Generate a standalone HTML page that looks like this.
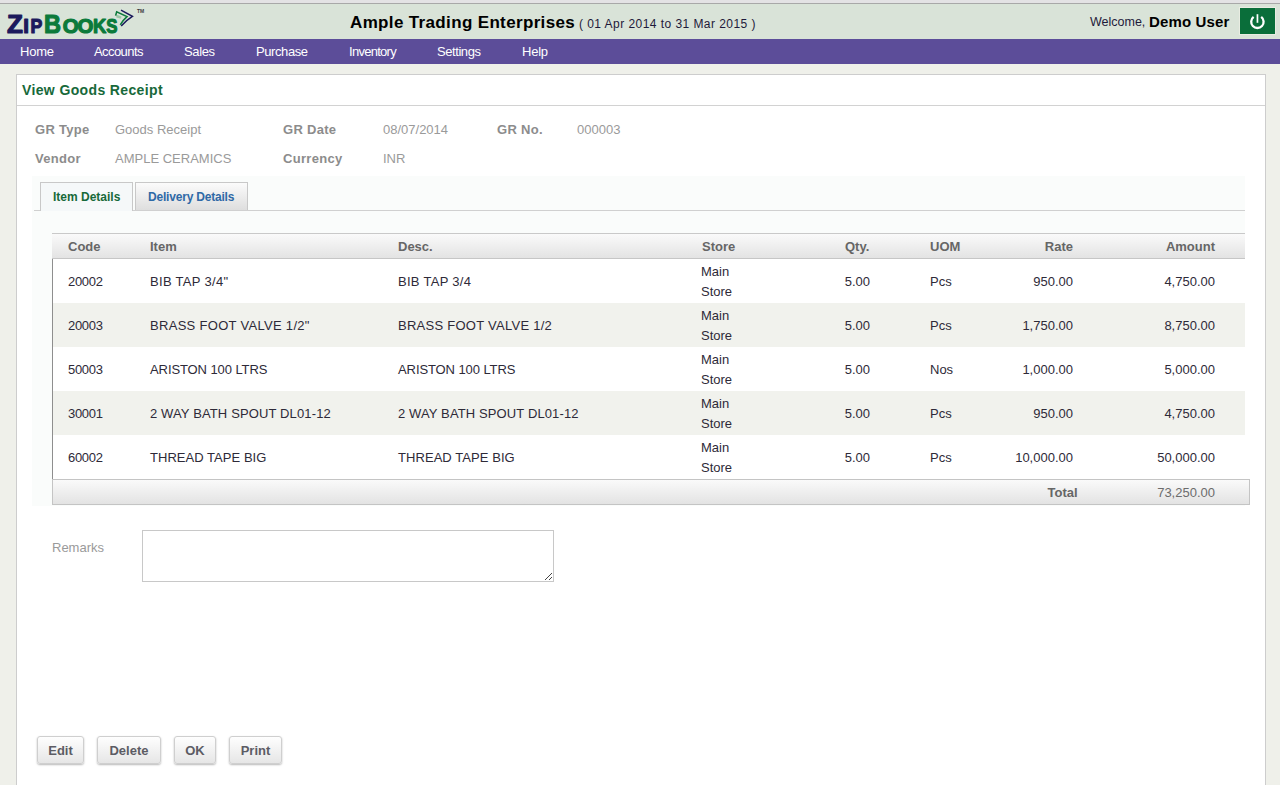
<!DOCTYPE html>
<html><head><meta charset="utf-8">
<style>
*{margin:0;padding:0;box-sizing:border-box}
html,body{width:1280px;height:785px;overflow:hidden}
body{background:#eff0ea;font-family:"Liberation Sans",sans-serif;position:relative;color:#333}
.a{position:absolute;white-space:nowrap;line-height:1}
#topstrip{left:0;top:0;width:1280px;height:3px;background:#e3e2e4}
#topline{left:0;top:3px;width:1280px;height:1px;background:#a8a8a8}
#hdr{left:0;top:4px;width:1280px;height:35px;background:#d9e3d8}
.lg{font-weight:bold;top:0}
.nv{color:#fff;font-size:13px;top:45px}
#nav{left:0;top:39px;width:1280px;height:25px;background:#5c4d99}
#panel{left:16px;top:74px;width:1250px;height:720px;background:#fff;border:1px solid #cdcdcd}
#ttl{left:22px;top:83px;font-size:14px;font-weight:bold;color:#17693a;letter-spacing:0.37px}
#sep{left:17px;top:105px;width:1248px;height:1px;background:#d2d2d2}
.lb{font-size:13px;font-weight:bold;color:#8c8c8c;letter-spacing:0.3px}
.vl{font-size:13px;color:#9a9a9a}
#tabwrap{left:32px;top:176px;width:1213px;height:330px;background:#fafcfb}
#tabline{left:34px;top:210px;width:1211px;height:1px;background:#d0d0d0}
.tab{top:182px;height:29px;border:1px solid #c8c8c8;border-bottom:none}
#tab1{left:40px;width:93px;background:#f5f8f9;height:29px}
#tab2{left:135px;width:113px;height:28px;background:linear-gradient(#fbfbfb,#dedede)}
.tt{font-size:12px;font-weight:bold;top:191px;letter-spacing:-0.2px}
#tbl{left:52px;top:233px;width:1193px;height:247px;border-left:1px solid #8e8e8e}
#thd{left:52px;top:233px;width:1193px;height:26px;border-top:1px solid #c9c9c9;border-bottom:1px solid #c6c6c6;background:linear-gradient(#fafafa,#e3e3e3)}
.th{font-size:13px;font-weight:bold;color:#666;top:240px}
.row{left:53px;width:1192px;height:44px;background:#fff}
.row.alt{background:#f1f2ed}
.td{font-size:13px;color:#2e2a38}
.r{text-align:right}
#tft{left:52px;top:479px;width:1198px;height:26px;border:1px solid #c4c4c4;background:linear-gradient(#fafafa,#e3e3e3)}
#rmk{left:52px;top:541px;font-size:13px;color:#9a9a9a}
#ta{left:142px;top:530px;width:412px;height:52px;border:1px solid #c8c8c8;background:#fff}
.btn{top:736px;height:28px;border:1px solid #cfcfcf;border-radius:3px;background:linear-gradient(#fefefe,#e6e6e6);box-shadow:0 1px 2px rgba(0,0,0,.28);font-size:13px;font-weight:bold;color:#5c5c64;text-align:center;line-height:27px}
</style></head><body>
<div class="a" id="topstrip"></div>
<div class="a" id="topline"></div>
<div class="a" id="hdr"></div>
<!-- logo -->
<svg class="a" style="left:0;top:0" width="160" height="40">
<g font-family="Liberation Sans" font-weight="bold" stroke-linejoin="round">
<text x="7" y="33.3" font-size="26" fill="#1b1a5c" stroke="#1b1a5c" stroke-width="1.2">Z</text>
<text x="23.3" y="33.3" font-size="20.5" fill="#1b1a5c" stroke="#1b1a5c" stroke-width="1.2">I</text>
<text x="30.4" y="33.3" font-size="20.5" fill="#1b1a5c" stroke="#1b1a5c" stroke-width="1.2" textLength="11.8" lengthAdjust="spacingAndGlyphs">P</text>
<text x="44" y="33.3" font-size="26" fill="#0b7a3b" stroke="#0b7a3b" stroke-width="1.2" textLength="17" lengthAdjust="spacingAndGlyphs">B</text>
<text x="62.8" y="33.3" font-size="20.5" fill="#0b7a3b" stroke="#0b7a3b" stroke-width="1.2">O</text>
<text x="77.4" y="33.3" font-size="20.5" fill="#0b7a3b" stroke="#0b7a3b" stroke-width="1.2">O</text>
<text x="93" y="33.3" font-size="20.5" fill="#0b7a3b" stroke="#0b7a3b" stroke-width="1.2" textLength="13.3" lengthAdjust="spacingAndGlyphs">K</text>
<text x="106.3" y="33.3" font-size="20.5" fill="#0b7a3b" stroke="#0b7a3b" stroke-width="1.2" textLength="11.2" lengthAdjust="spacingAndGlyphs">S</text>
</g>
<path d="M116.3 14.6 L121.5 16.4 L121 18.8 L116.3 17.4Z" fill="#9cc6a6"/>
<path d="M115.6 15.6 L116.7 11.8 L127 16.6 Q123.2 19.8 120.3 24.9" fill="none" stroke="#0d7a3c" stroke-width="1.6"/>
<path d="M121 10.2 L132.4 16.3 Q125.8 20.5 121.2 25.9" fill="none" stroke="#1b1a5c" stroke-width="1.5"/>
<text x="137" y="12.7" font-family="Liberation Sans" font-weight="bold" font-size="5" fill="#3a3a3a">TM</text>
</svg>
<div class="a" style="left:350px;top:14px;font-size:17px;font-weight:bold;color:#000;letter-spacing:0.35px">Ample Trading Enterprises</div>
<div class="a" style="left:579px;top:17.5px;font-size:12px;letter-spacing:0.45px;color:#1e1a3a">( 01 Apr 2014 to 31 Mar 2015 )</div>
<div class="a" style="left:1090px;top:16px;font-size:12.5px;color:#1e1a3a">Welcome,</div>
<div class="a" style="left:1149px;top:14px;font-size:15px;font-weight:bold;color:#000;letter-spacing:0.15px">Demo User</div>
<div class="a" style="left:1239px;top:7px;width:37px;height:28px;background:#e8ece2"></div>
<div class="a" style="left:1240px;top:8px;width:35px;height:26px;background:#0a6e3a"></div>
<svg class="a" style="left:1240px;top:8px" width="35" height="26">
<path d="M13.6 8.9 A6.2 6.2 0 1 0 21.2 8.9" fill="none" stroke="#fff" stroke-width="2.3"/>
<rect x="16.6" y="6.2" width="1.7" height="8.6" fill="#fff"/>
</svg>

<div class="a" id="nav"></div>
<div class="a nv" style="left:20px;letter-spacing:-0.23px">Home</div>
<div class="a nv" style="left:94px;letter-spacing:-0.57px">Accounts</div>
<div class="a nv" style="left:184px;letter-spacing:-0.38px">Sales</div>
<div class="a nv" style="left:256px;letter-spacing:-0.41px">Purchase</div>
<div class="a nv" style="left:349px;letter-spacing:-0.72px">Inventory</div>
<div class="a nv" style="left:437px;letter-spacing:-0.43px">Settings</div>
<div class="a nv" style="left:522px;letter-spacing:-0.23px">Help</div>

<div class="a" id="panel"></div>
<div class="a" id="ttl">View Goods Receipt</div>
<div class="a" id="sep"></div>

<div class="a lb" style="left:35px;top:123px">GR Type</div>
<div class="a vl" style="left:115px;top:123px">Goods Receipt</div>
<div class="a lb" style="left:283px;top:123px">GR Date</div>
<div class="a vl" style="left:383px;top:123px">08/07/2014</div>
<div class="a lb" style="left:497px;top:123px">GR No.</div>
<div class="a vl" style="left:577px;top:123px">000003</div>
<div class="a lb" style="left:35px;top:152px">Vendor</div>
<div class="a vl" style="left:115px;top:152px">AMPLE CERAMICS</div>
<div class="a lb" style="left:283px;top:152px">Currency</div>
<div class="a vl" style="left:383px;top:152px">INR</div>

<div class="a" id="tabwrap"></div>
<div class="a" id="tabline"></div>
<div class="a tab" id="tab1"></div>
<div class="a tab" id="tab2"></div>
<div class="a tt" style="left:53px;color:#17693a;letter-spacing:0px">Item Details</div>
<div class="a tt" style="left:148px;color:#2f69a6">Delivery Details</div>

<div class="a" id="tbl"></div>
<div class="a" id="thd"></div>
<div class="a th" style="left:68px">Code</div>
<div class="a th" style="left:150px">Item</div>
<div class="a th" style="left:398px">Desc.</div>
<div class="a th" style="left:702px">Store</div>
<div class="a th" style="left:845px">Qty.</div>
<div class="a th" style="left:930px">UOM</div>
<div class="a th r" style="left:973px;width:100px">Rate</div>
<div class="a th r" style="left:1115px;width:100px">Amount</div>

<div class="a row" style="top:259px"></div>
<div class="a row alt" style="top:303px"></div>
<div class="a row" style="top:347px"></div>
<div class="a row alt" style="top:391px"></div>
<div class="a row" style="top:435px"></div>

<!--ROWS-->
<div class="a td" style="left:68px;top:275px;letter-spacing:-0.3px">20002</div>
<div class="a td" style="left:150px;top:275px;letter-spacing:0.31px">BIB TAP 3/4&quot;</div>
<div class="a td" style="left:398px;top:275px;letter-spacing:0.28px">BIB TAP 3/4</div>
<div class="a td" style="left:701px;top:265px">Main</div>
<div class="a td" style="left:701px;top:285px">Store</div>
<div class="a td r" style="left:770px;width:100px;top:275px">5.00</div>
<div class="a td" style="left:930px;top:275px">Pcs</div>
<div class="a td r" style="left:973px;width:100px;top:275px">950.00</div>
<div class="a td r" style="left:1115px;width:100px;top:275px">4,750.00</div>
<div class="a td" style="left:68px;top:319px;letter-spacing:-0.3px">20003</div>
<div class="a td" style="left:150px;top:319px;letter-spacing:0.3px">BRASS FOOT VALVE 1/2&quot;</div>
<div class="a td" style="left:398px;top:319px;letter-spacing:0.26px">BRASS FOOT VALVE 1/2</div>
<div class="a td" style="left:701px;top:309px">Main</div>
<div class="a td" style="left:701px;top:329px">Store</div>
<div class="a td r" style="left:770px;width:100px;top:319px">5.00</div>
<div class="a td" style="left:930px;top:319px">Pcs</div>
<div class="a td r" style="left:973px;width:100px;top:319px">1,750.00</div>
<div class="a td r" style="left:1115px;width:100px;top:319px">8,750.00</div>
<div class="a td" style="left:68px;top:363px;letter-spacing:-0.3px">50003</div>
<div class="a td" style="left:150px;top:363px;letter-spacing:-0.09px">ARISTON 100 LTRS</div>
<div class="a td" style="left:398px;top:363px;letter-spacing:-0.09px">ARISTON 100 LTRS</div>
<div class="a td" style="left:701px;top:353px">Main</div>
<div class="a td" style="left:701px;top:373px">Store</div>
<div class="a td r" style="left:770px;width:100px;top:363px">5.00</div>
<div class="a td" style="left:930px;top:363px">Nos</div>
<div class="a td r" style="left:973px;width:100px;top:363px">1,000.00</div>
<div class="a td r" style="left:1115px;width:100px;top:363px">5,000.00</div>
<div class="a td" style="left:68px;top:407px;letter-spacing:-0.3px">30001</div>
<div class="a td" style="left:150px;top:407px;letter-spacing:0.13px">2 WAY BATH SPOUT DL01-12</div>
<div class="a td" style="left:398px;top:407px;letter-spacing:0.12px">2 WAY BATH SPOUT DL01-12</div>
<div class="a td" style="left:701px;top:397px">Main</div>
<div class="a td" style="left:701px;top:417px">Store</div>
<div class="a td r" style="left:770px;width:100px;top:407px">5.00</div>
<div class="a td" style="left:930px;top:407px">Pcs</div>
<div class="a td r" style="left:973px;width:100px;top:407px">950.00</div>
<div class="a td r" style="left:1115px;width:100px;top:407px">4,750.00</div>
<div class="a td" style="left:68px;top:451px;letter-spacing:-0.3px">60002</div>
<div class="a td" style="left:150px;top:451px;letter-spacing:0.04px">THREAD TAPE BIG</div>
<div class="a td" style="left:398px;top:451px;letter-spacing:0.06px">THREAD TAPE BIG</div>
<div class="a td" style="left:701px;top:441px">Main</div>
<div class="a td" style="left:701px;top:461px">Store</div>
<div class="a td r" style="left:770px;width:100px;top:451px">5.00</div>
<div class="a td" style="left:930px;top:451px">Pcs</div>
<div class="a td r" style="left:973px;width:100px;top:451px">10,000.00</div>
<div class="a td r" style="left:1115px;width:100px;top:451px">50,000.00</div>
<!--/ROWS-->

<div class="a" id="tft"></div>
<div class="a th" style="left:1047.5px;top:486px">Total</div>
<div class="a th r" style="left:1115px;top:486px;width:100px;font-weight:normal;color:#6c6c6c">73,250.00</div>

<div class="a" id="rmk">Remarks</div>
<div class="a" id="ta"></div>
<svg class="a" style="left:540px;top:568px" width="14" height="14">
<path d="M5 12 L12 5 M9 12 L12 9" stroke="#444" stroke-width="1"/>
</svg>

<div class="a btn" style="left:37px;width:47px">Edit</div>
<div class="a btn" style="left:97px;width:64px">Delete</div>
<div class="a btn" style="left:174px;width:42px">OK</div>
<div class="a btn" style="left:229px;width:53px">Print</div>
</body></html>
